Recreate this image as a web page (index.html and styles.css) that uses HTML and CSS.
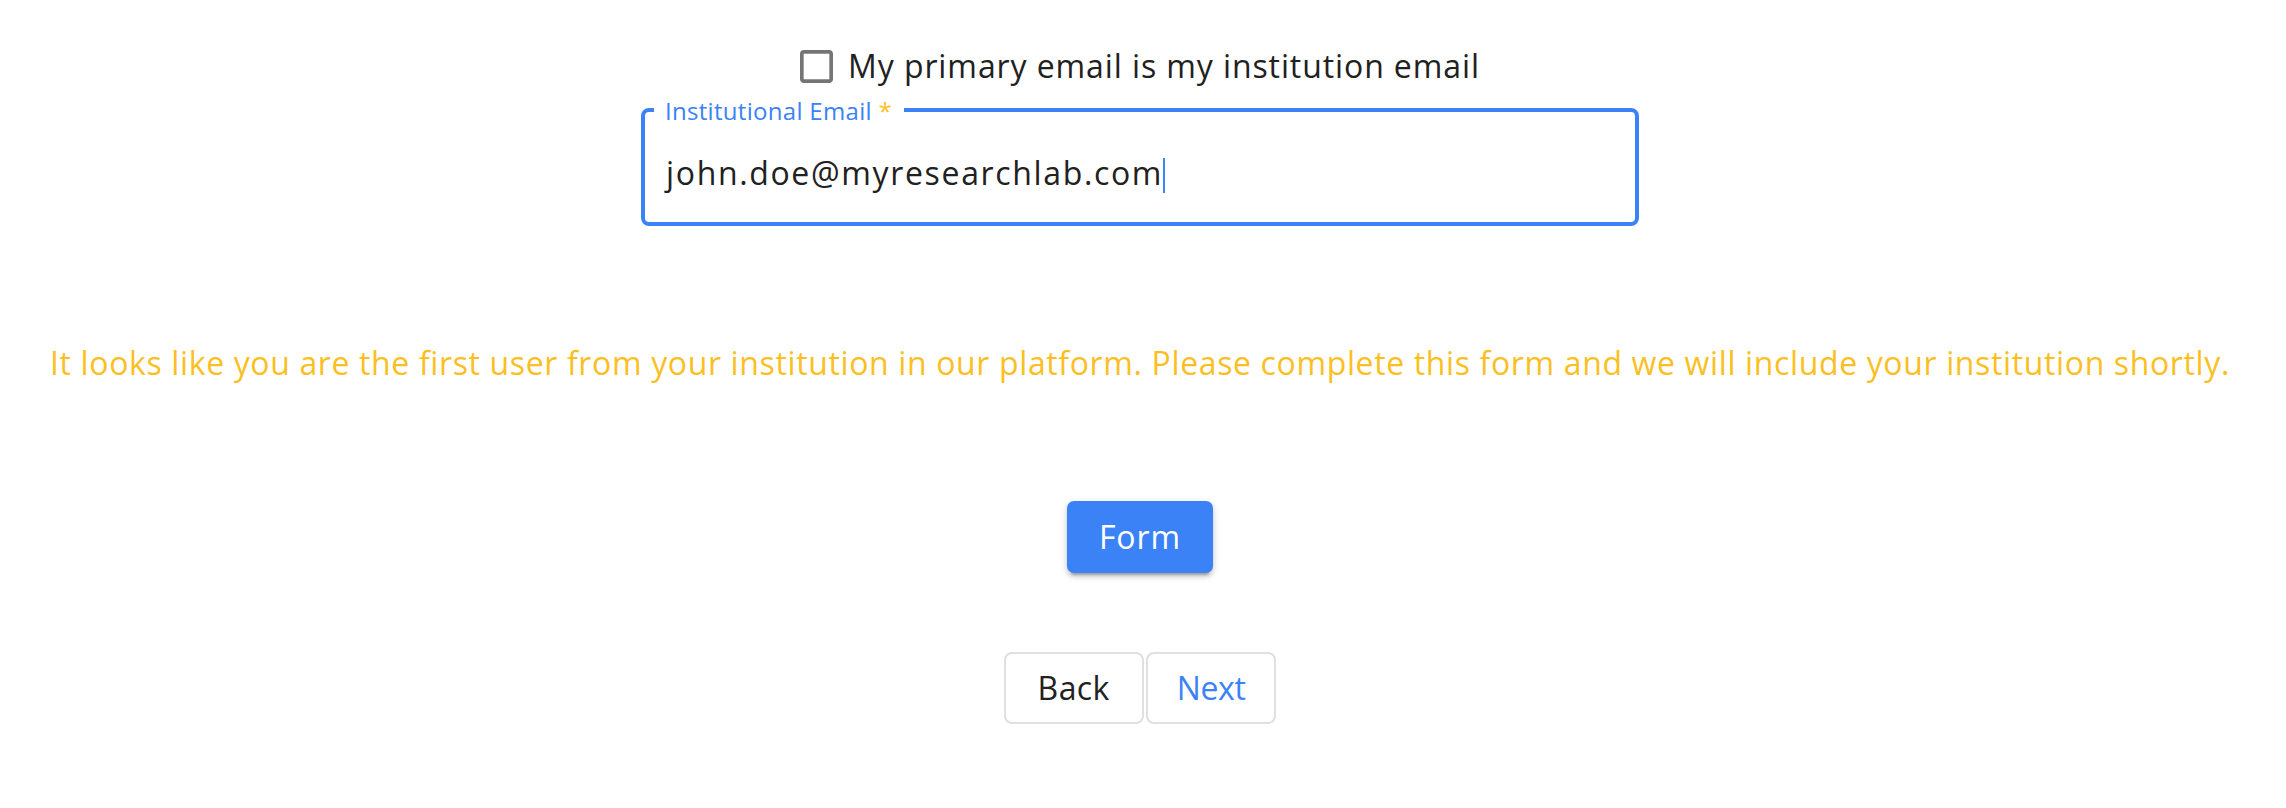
FILE: index.html
```html
<!DOCTYPE html>
<html lang="en">
<head>
<meta charset="utf-8">
<title>Institution email</title>
<link rel="stylesheet" href="styles.css">
</head>
<body>
<main class="page">
  <label class="check-row">
    <svg class="check-icon" viewBox="3 3 18 18" width="33" height="33" aria-hidden="true">
      <path d="M19 5v14H5V5h14m0-2H5c-1.1 0-2 .9-2 2v14c0 1.1.9 2 2 2h14c1.1 0 2-.9 2-2V5c0-1.1-.9-2-2-2z" fill="#757575"/>
    </svg>
    <span class="check-label">My primary email is my institution email</span>
  </label>

  <div class="field">
    <span class="field-label">Institutional Email<span class="req"> *</span></span>
    <span class="field-value">john.doe@myresearchlab.com<span class="caret"></span></span>
  </div>

  <p class="notice">It looks like you are the first user from your institution in our platform. Please complete this form and we will include your institution shortly.</p>

  <button class="btn-form" type="button">Form</button>

  <div class="nav">
    <button class="btn-nav back" type="button">Back</button>
    <button class="btn-nav next" type="button">Next</button>
  </div>
</main>
</body>
</html>
```

FILE: styles.css
```css
html, body {
  margin: 0;
  padding: 0;
  background: #ffffff;
}

body {
  font-family: "Open Sans", "Noto Sans", sans-serif;
  color: #212121;
}

.page {
  display: flex;
  flex-direction: column;
  align-items: center;
  padding: 24px 6px 0 0;
}

.check-row {
  display: flex;
  align-items: center;
  gap: 15px;
  height: 84px;
  margin-left: 0;
}

.check-icon {
  display: block;
  flex: none;
}

.check-label {
  font-size: 32px;
  line-height: 48px;
  letter-spacing: 0.9px;
  color: #212121;
}

.field {
  position: relative;
  box-sizing: border-box;
  width: 998px;
  height: 118px;
  border: 4px solid #3b82f6;
  border-radius: 8px;
  padding: 41px 0 0 21px;
}

.field-label {
  position: absolute;
  top: -13px;
  left: 9px;
  padding: 0 12px 0 11px;
  background: #ffffff;
  font-size: 24px;
  line-height: 24px;
  letter-spacing: 0.3px;
  color: #3b82f6;
  white-space: nowrap;
}

.req {
  color: #fbbf24;
}

.field-value {
  display: block;
  font-size: 32px;
  line-height: 40px;
  letter-spacing: 1.65px;
  color: #212121;
  white-space: nowrap;
}

.caret {
  display: inline-block;
  width: 2px;
  height: 35px;
  margin-left: 0;
  vertical-align: -8px;
  background: #3b82f6;
}

.notice {
  margin: 113px 0 0 0;
  font-size: 32px;
  line-height: 48px;
  letter-spacing: 0.63px;
  color: #fbbf24;
  text-align: center;
  white-space: nowrap;
}

.btn-form {
  margin-top: 114px;
  box-sizing: border-box;
  height: 72px;
  padding: 0 32px;
  border: none;
  border-radius: 7px;
  background: #3b82f6;
  color: #ffffff;
  font-family: inherit;
  font-size: 32px;
  line-height: 48px;
  letter-spacing: 0.9px;
  box-shadow: 0 6px 2px -4px rgba(0,0,0,0.2), 0 4px 4px 0 rgba(0,0,0,0.14), 0 2px 10px 0 rgba(0,0,0,0.12);
  cursor: pointer;
}

.nav {
  display: flex;
  gap: 2px;
  margin-top: 79px;
}

.btn-nav {
  box-sizing: border-box;
  height: 72px;
  padding: 0 32px;
  border: 2px solid #e0e0e0;
  border-radius: 8px;
  background: #ffffff;
  color: #212121;
  font-family: inherit;
  font-size: 32px;
  line-height: 48px;
  letter-spacing: 0.4px;
  cursor: pointer;
}

.btn-nav.next {
  padding: 0 29px;
  letter-spacing: -0.4px;
  color: #3b82f6;
}
```
